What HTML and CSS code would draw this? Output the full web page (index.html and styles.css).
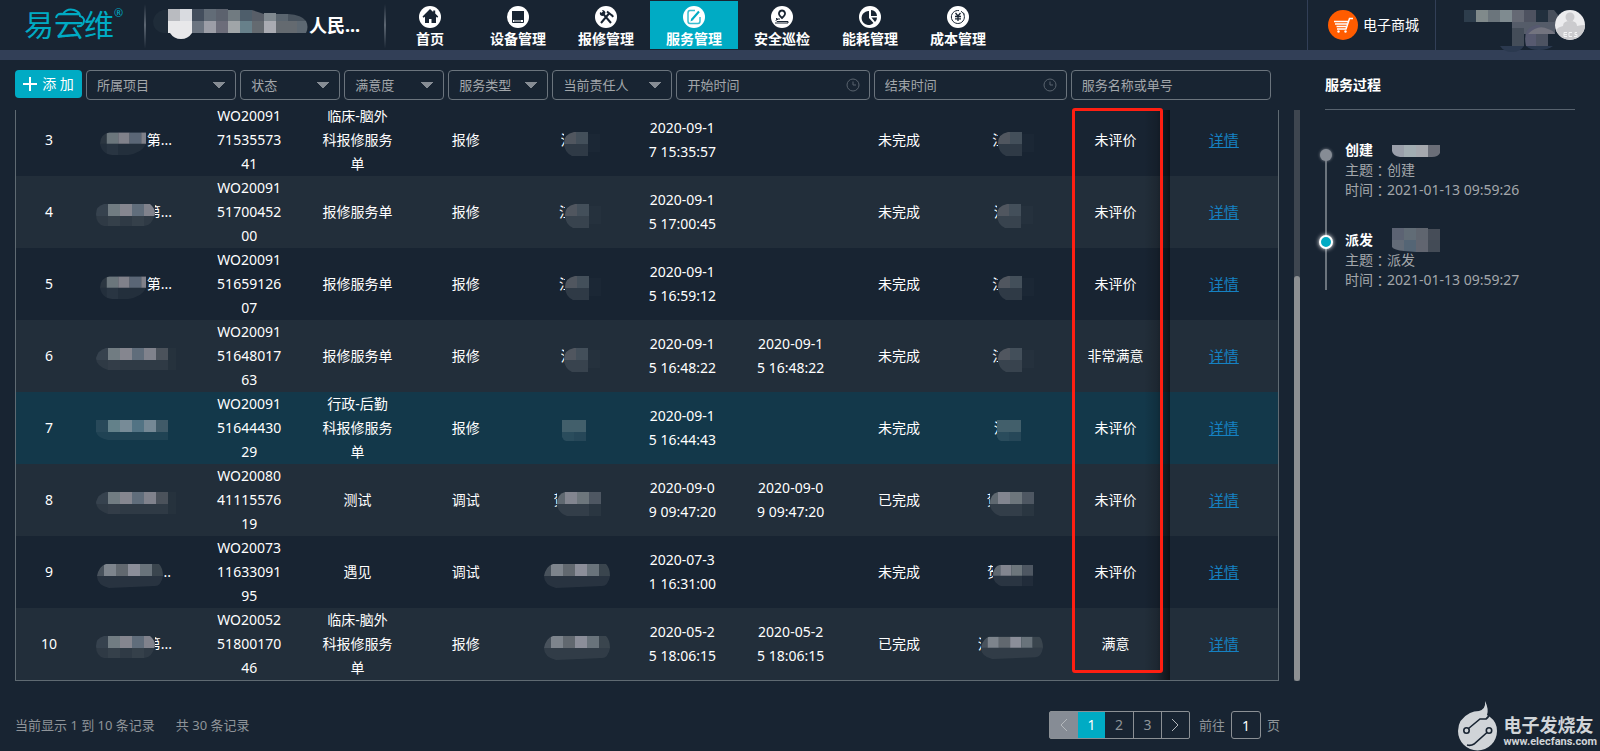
FILE: index.html
```html
<!DOCTYPE html>
<html lang="zh-CN">
<head>
<meta charset="utf-8">
<title>服务管理</title>
<link rel="stylesheet" href="styles.css">
</head>
<body>
<svg class="defs" aria-hidden="true">
  <clipPath id="c48"><path d="M48 8H10Q0 10 0 20Q2 32 16 32H28Q44 30 48 20Z"/></clipPath>
  <clipPath id="c59"><path d="M8 8H54Q59 12 59 18Q56 30 48 30H8Q0 28 0 18Q0 10 8 8Z"/></clipPath>
  <clipPath id="c80"><path d="M10 8H80V30H12Q0 26 0 18Q2 10 10 8Z"/></clipPath>
  <clipPath id="c36"><path d="M10 8H24V10H36V28H24V32H8Q0 28 0 19Q0 10 10 8Z"/></clipPath>
  <clipPath id="c44"><path d="M8 8H44V32H10Q0 28 0 20Q0 10 8 8Z"/></clipPath>
  <clipPath id="c66"><path d="M9 8H62Q66 12 66 20Q64 30 58 30L12 32Q0 29 0 20Q2 10 9 8Z"/></clipPath>
  <symbol id="m48" viewBox="0 0 48 32"><g clip-path="url(#c48)"><path fill="#2b3641" d="M0 8h7v12H0z"/><path fill="#6b767c" d="M7 8h12v12H7z"/><path fill="#80818a" d="M19 8h12v12H19z"/><path fill="#5a6676" d="M31 8h12v12H31z"/><path fill="#80818a" d="M43 8h5v12h-5z"/><path fill="#fff" opacity=".05" d="M0 20h48v12H0z"/><path fill="#fff" opacity=".03" d="M7 20h12v12H7z"/></g></symbol>
  <symbol id="m59" viewBox="0 0 59 32"><g clip-path="url(#c59)"><path fill="#36424e" d="M0 8h12v12H0z"/><path fill="#717c82" d="M12 8h12v12H12z"/><path fill="#85868f" d="M24 8h12v12H24z"/><path fill="#606d7b" d="M36 8h12v12H36z"/><path fill="#80828c" d="M48 8h11v12H48z"/><path fill="#fff" opacity=".06" d="M0 20h59v12H0z"/><path fill="#fff" opacity=".03" d="M12 20h12v12H12zM36 20h12v12H36z"/></g></symbol>
  <symbol id="m80" viewBox="0 0 80 32"><g clip-path="url(#c80)"><path fill="#36424e" d="M0 8h12v12H0z"/><path fill="#717c82" d="M12 8h12v12H12z"/><path fill="#85868f" d="M24 8h12v12H24z"/><path fill="#606d7b" d="M36 8h12v12H36z"/><path fill="#80828c" d="M48 8h12v12H48z"/><path fill="#4b525b" d="M60 8h12v12H60z"/><path fill="#fff" opacity=".06" d="M0 20h72v12H0z"/><path fill="#fff" opacity=".02" d="M72 8h8v22h-8zM12 20h12v12H12z"/></g></symbol>
  <symbol id="m80t" viewBox="0 0 80 32"><path fill="#28495a" d="M0 8h12v12H0z"/><path fill="#63818a" d="M12 8h12v12H12z"/><path fill="#778b97" d="M24 8h12v12H24z"/><path fill="#527384" d="M36 8h12v12H36z"/><path fill="#758895" d="M48 8h12v12H48z"/><path fill="#405a68" d="M60 8h12v12H60z"/><path fill="#fff" opacity=".06" d="M0 20h72v8H12Q2 26 0 20z"/></symbol>
  <symbol id="m36" viewBox="0 0 36 32"><g clip-path="url(#c36)"><path fill="#50565f" d="M0 8h12v12H0z"/><path fill="#434f5a" d="M12 8h12v12H12z"/><path fill="#fff" opacity=".1" d="M0 20h24v12H0z"/><path fill="#fff" opacity=".015" d="M24 8h12v20H24z"/></g></symbol>
  <symbol id="m36t" viewBox="0 0 36 32"><path fill="#425f6b" d="M0 8h24v12H0z"/><path fill="#2a4c5c" d="M0 20h24v9H4q-3-1-4-4z"/><path fill="#264758" d="M12 20h12v9H12z"/></symbol>
  <symbol id="m44" viewBox="0 0 44 32"><g clip-path="url(#c44)"><path fill="#5f6870" d="M0 8h8v12H0z"/><path fill="#82858f" d="M8 8h12v12H8z"/><path fill="#6d767c" d="M20 8h12v12H20z"/><path fill="#4e5762" d="M32 8h12v12H32z"/><path fill="#fff" opacity=".08" d="M0 20h32v12H0z"/><path fill="#fff" opacity=".04" d="M32 20h12v12H32z"/></g></symbol>
  <symbol id="m66" viewBox="0 0 66 32"><g clip-path="url(#c66)"><path fill="#48525c" d="M0 8h7v12H0z"/><path fill="#7d848c" d="M7 8h12v12H7z"/><path fill="#61686f" d="M19 8h12v12H19z"/><path fill="#8b8e99" d="M31 8h12v12H31z"/><path fill="#69737b" d="M43 8h12v12H43z"/><path fill="#3a454e" d="M55 8h11v12H55z"/><path fill="#fff" opacity=".07" d="M0 20h66v12H0z"/></g></symbol>
</svg>

<header class="topbar">
  <a class="logo" href="#">易云维<sup>®</sup>
    <svg class="logo-cloud" viewBox="0 0 34 20" fill="none" stroke="#00abc4" stroke-width="2"><path d="M3 10Q4 5 10 6Q14 0 21 2Q27 4 27 8Q33 10 30 16Q28 19 24 18"/></svg>
  </a>
  <div class="tenant">
    <svg width="156" height="32" viewBox="0 0 156 32"><path fill="#1f2c39" d="M10 1H30V24H10Q0 22 0 12Q2 3 10 1Z"/><path fill="#b9bbc0" d="M15 0h12v12H15z"/><path fill="#d9dbe0" d="M27 0h12v12H27z"/><path fill="#434e5d" d="M39 0h12v12H39z"/><path fill="#626c77" d="M51 0h12v12H51z"/><path fill="#5c626e" d="M63 0h12v12H63z"/><path fill="#717b81" d="M75 1h12v11H75z"/><path fill="#4e5e6b" d="M87 1h12v11H87z"/><path fill="#585e68" d="M99 1l12 4v7H99z"/><path fill="#7f888f" d="M111 4h12v8h-12z"/><path fill="#5a656f" d="M123 5h12v7h-12z"/><path fill="#48535e" d="M135 5q14 1 18 7h-18z"/><path fill="#e8e8ea" d="M15 12h24v12q-4 6-11 6t-11-6h-2z"/><path fill="#6b7480" d="M39 12h12v12H39z"/><path fill="#9c9ea7" d="M51 12h12v12H51z"/><path fill="#6c6d7a" d="M63 12h12v12H63z"/><path fill="#a0a5a8" d="M75 12h12v12H75z"/><path fill="#67808a" d="M87 12h12v12H87z"/><path fill="#646a70" d="M99 12h12v12H99z"/><path fill="#a9abb2" d="M111 12h12v12h-12z"/><path fill="#646a70" d="M123 12h21v12h-21z"/><path fill="#5d6872" d="M144 12h9q3 6 0 12h-9z"/></svg>
    <strong>人民...</strong>
  </div>
  <nav class="nav">
    <a href="#"><svg viewBox="0 0 22 22"><circle cx="11" cy="11" r="11" fill="#fff"/><path fill="#182432" d="M11 3L3.500 10.500l1 1.200L6 10.800V17h4v-4h2.500v4H17v-6.200l1.200 1 1-1.200-3-3V4.500h-2V6z"/></svg>首页</a>
    <a href="#"><svg viewBox="0 0 22 22"><circle cx="11" cy="11" r="11" fill="#fff"/><path fill="#182432" d="M5 5h12v9H5z"/><path fill="none" stroke="#182432" d="M5.500 5.500h11v11h-11zM7 15h7"/></svg>设备管理</a>
    <a href="#"><svg viewBox="0 0 22 22"><circle cx="11" cy="11" r="11" fill="#fff"/><path fill="none" stroke="#182432" stroke-width="2" d="M7 6.500L16 17M6 17l8-9.500M12 5.500l5 4M17 9l1 2"/><path fill="#182432" d="M5 6l2 1 1-1-1-2q3 0 3.500 3L8 10Q4 10 5 6z"/></svg>报修管理</a>
    <a class="active" href="#" aria-current="page"><svg viewBox="0 0 22 22"><circle cx="11" cy="11" r="11" fill="#fff"/><path fill="none" stroke="#38bdd0" stroke-width="1.500" d="M12 4.500H7Q5 4.500 5 7v8q0 2.500 2 2.500h8q2 0 2-2.500v-4"/><path fill="none" stroke="#00abc4" stroke-width="2" d="M9 13.500l7-8"/><path fill="#00abc4" d="M7.500 15.500l.7-3 2.200 1.500z"/></svg>服务管理</a>
    <a href="#"><svg viewBox="0 0 22 22"><circle cx="11" cy="11" r="11" fill="#fff"/><path fill="none" stroke="#182432" stroke-width="1.800" d="M11 12Q7.500 9 8 7q.8-2.500 3-2.500T14 7q.5 2-3 5z"/><path fill="none" stroke="#182432" d="M9 13H6q-2 1.500 0 2.500h11v1.500H4M5 12l2 2"/></svg>安全巡检</a>
    <a href="#"><svg viewBox="0 0 22 22"><circle cx="11" cy="11" r="11" fill="#fff"/><path fill="#182432" d="M10 5v7l4.500 5A7 7 0 1 1 10 5z"/><path fill="#182432" d="M12 4a6 6 0 0 1 6 6h-6zM12.500 11.500H18q0 3-2 4.500z"/></svg>能耗管理</a>
    <a href="#"><svg viewBox="0 0 22 22"><circle cx="11" cy="11" r="11" fill="#fff"/><g fill="none" stroke="#182432"><path d="M14 5.300a6.500 6.500 0 1 1-2-.7M16 6.500q1 1 1.300 2"/><path stroke-width="1.300" d="M8.500 7l2.500 3 2.500-3M11 10v5M8 10.500h6M8 12.800h6"/></g></svg>成本管理</a>
  </nav>
  <a class="mall" href="#">
    <svg viewBox="0 0 30 30"><circle cx="15" cy="15" r="15" fill="#ff5c00"/><g fill="none" stroke="#fff" stroke-width="1.500"><path d="M25 8.500h-3.500L18 19H9M6 11.500h14M7 14h12M8.500 16.500H18"/></g><circle cx="10.500" cy="21.500" r="1.200" fill="#fff"/><circle cx="17.500" cy="21.500" r="1.200" fill="#fff"/></svg>
    电子商城
  </a>
  <div class="user">
    <svg width="94" height="44" viewBox="0 0 94 44"><path fill="#2d3d4c" d="M0 2h12v12H0z"/><path fill="#808a8b" d="M12 2h12v12H12z"/><path fill="#6b757c" d="M24 2h12v12H24z"/><path fill="#7f8b90" d="M36 2h12v12H36z"/><path fill="#656974" d="M48 2h12v12H48z"/><path fill="#4e5260" d="M60 2h12v12H60z"/><path fill="#22303e" d="M72 2h12v12H72z"/><path fill="#484f5b" d="M84 2h6l4 5v7H84z"/><path fill="#555c69" d="M48 14h43v12H48z"/><path fill="#444d59" d="M48 20h12v18H48z"/><path fill="#2b394f" d="M36 38h24q-4 6-12 6t-12-6zM62 38h27q-5 4-14 4t-13-4z"/><path fill="#575a70" d="M62 38Q58 20 72 17h4v21z"/><path fill="#73747f" d="M64 26q10-10 20-5 6 2 7 5z"/><path fill="#4d5362" d="M72 26h12v12H72z"/></svg>
    <svg width="30" height="30" viewBox="0 0 30 30"><circle cx="15" cy="15" r="15" fill="#ececee"/><circle cx="15" cy="7" r="4.500" fill="#cbcbce"/><path fill="#cbcbce" d="M8 16q0-5 7-5t7 5q4-1 8-1a15 15 0 0 1-29 5q2-3 7-4z"/><path fill="none" stroke="#f4f4f5" d="M12 22.500H9v4h3M9 24.500h3M17 22.500h-3v4h3M22 22.500h-2v2h2v2h-3"/></svg>
  </div>
</header>

<main class="main">
  <section class="list">
    <form class="filters">
      <button type="button" class="add"><svg viewBox="0 0 14 14"><path stroke="#fff" stroke-width="2" d="M7 0v14M0 7h14"/></svg>添 加</button>
      <select aria-label="所属项目"><option>所属项目</option></select>
      <select aria-label="状态"><option>状态</option></select>
      <select aria-label="满意度"><option>满意度</option></select>
      <select aria-label="服务类型"><option>服务类型</option></select>
      <select aria-label="当前责任人"><option>当前责任人</option></select>
      <label class="date"><input type="text" placeholder="开始时间" aria-label="开始时间"><svg viewBox="0 0 14 14"><circle cx="7" cy="7" r="6"/><path d="M7 3.500V7h3"/></svg></label>
      <label class="date"><input type="text" placeholder="结束时间" aria-label="结束时间"><svg viewBox="0 0 14 14"><circle cx="7" cy="7" r="6"/><path d="M7 3.500V7h3"/></svg></label>
      <input type="text" placeholder="服务名称或单号" aria-label="服务名称或单号">
    </form>

    <div class="table-area">
      <div class="table-box">
        <table>
          <colgroup><col class="col-no"><col class="col-project"><col span="10"></colgroup>
          <tbody>
            <tr><td>3</td><td class="project"><span class="masked inset"><svg width="46" height="32"><use href="#m48"/></svg><span class="tail">第...</span></span></td><td>WO200917153557341</td><td>临床-脑外科报修服务单</td><td>报修</td><td class="person"><span class="masked short"><span class="clip clip-s">江</span><svg width="36" height="32"><use href="#m36"/></svg></span></td><td>2020-09-17 15:35:57</td><td></td><td>未完成</td><td class="person"><span class="masked short"><span class="clip">江</span><svg width="36" height="32"><use href="#m36"/></svg></span></td><td>未评价</td><td><a class="detail" href="#">详情</a></td></tr>
            <tr><td>4</td><td class="project"><span class="masked"><svg width="59" height="32"><use href="#m59"/></svg><span class="tail tail-m">第...</span></span></td><td>WO200915170045200</td><td>报修服务单</td><td>报修</td><td class="person"><span class="masked short"><span class="clip">江</span><svg width="36" height="32"><use href="#m36"/></svg></span></td><td>2020-09-15 17:00:45</td><td></td><td>未完成</td><td class="person"><span class="masked short"><span class="clip clip-s">江</span><svg width="36" height="32"><use href="#m36"/></svg></span></td><td>未评价</td><td><a class="detail" href="#">详情</a></td></tr>
            <tr><td>5</td><td class="project"><span class="masked inset"><svg width="46" height="32"><use href="#m48"/></svg><span class="tail">第...</span></span></td><td>WO200915165912607</td><td>报修服务单</td><td>报修</td><td class="person"><span class="masked short"><span class="clip">江</span><svg width="36" height="32"><use href="#m36"/></svg></span></td><td>2020-09-15 16:59:12</td><td></td><td>未完成</td><td class="person"><span class="masked short"><span class="clip">江</span><svg width="36" height="32"><use href="#m36"/></svg></span></td><td>未评价</td><td><a class="detail" href="#">详情</a></td></tr>
            <tr><td>6</td><td class="project"><span class="masked"><svg width="80" height="32"><use href="#m80"/></svg></span></td><td>WO200915164801763</td><td>报修服务单</td><td>报修</td><td class="person"><span class="masked short"><span class="clip clip-s">江</span><svg width="36" height="32"><use href="#m36"/></svg></span></td><td>2020-09-15 16:48:22</td><td>2020-09-15 16:48:22</td><td>未完成</td><td class="person"><span class="masked short"><span class="clip">江</span><svg width="36" height="32"><use href="#m36"/></svg></span></td><td>非常满意</td><td><a class="detail" href="#">详情</a></td></tr>
            <tr class="current"><td>7</td><td class="project"><span class="masked"><svg width="80" height="32"><use href="#m80t"/></svg></span></td><td>WO200915164443029</td><td>行政-后勤科报修服务单</td><td>报修</td><td class="person"><span class="masked short"><svg width="36" height="32"><use href="#m36t"/></svg></span></td><td>2020-09-15 16:44:43</td><td></td><td>未完成</td><td class="person"><span class="masked short"><span class="clip clip-s">江</span><svg width="36" height="32"><use href="#m36t"/></svg></span></td><td>未评价</td><td><a class="detail" href="#">详情</a></td></tr>
            <tr><td>8</td><td class="project"><span class="masked"><svg width="80" height="32"><use href="#m80"/></svg></span></td><td>WO200804111557619</td><td>测试</td><td>调试</td><td class="person"><span class="masked"><span class="clip clip-s">贺</span><svg width="44" height="32"><use href="#m44"/></svg></span></td><td>2020-09-09 09:47:20</td><td>2020-09-09 09:47:20</td><td>已完成</td><td class="person"><span class="masked"><span class="clip clip-s">贺</span><svg width="44" height="32"><use href="#m44"/></svg></span></td><td>未评价</td><td><a class="detail" href="#">详情</a></td></tr>
            <tr><td>9</td><td class="project"><span class="masked"><svg width="68" height="32"><use href="#m66"/></svg><span class="tail tail-s">第...</span></span></td><td>WO200731163309195</td><td>遇见</td><td>调试</td><td class="person"><span class="masked"><svg width="66" height="32"><use href="#m66"/></svg></span></td><td>2020-07-31 16:31:00</td><td></td><td>未完成</td><td class="person"><span class="masked"><span class="clip">贺</span><svg width="40" height="32"><use href="#m44"/></svg></span></td><td>未评价</td><td><a class="detail" href="#">详情</a></td></tr>
            <tr><td>10</td><td class="project"><span class="masked"><svg width="59" height="32"><use href="#m59"/></svg><span class="tail tail-m">第...</span></span></td><td>WO200525180017046</td><td>临床-脑外科报修服务单</td><td>报修</td><td class="person"><span class="masked"><svg width="66" height="32"><use href="#m66"/></svg></span></td><td>2020-05-25 18:06:15</td><td>2020-05-25 18:06:15</td><td>已完成</td><td class="person"><span class="masked"><span class="clip clip-s">江</span><svg width="62" height="32"><use href="#m66"/></svg></span></td><td>满意</td><td><a class="detail" href="#">详情</a></td></tr>
          </tbody>
        </table>
      </div>
      <div class="pinned-shadow"></div>
      <div class="highlight"></div>
    </div>

    <footer class="pager">
      <p><span>当前显示 1 到 10 条记录</span><span>共 30 条记录</span></p>
      <div class="pages">
        <button type="button" class="prev" disabled aria-label="上一页"><svg viewBox="0 0 8 14"><path d="M7 1L1 7l6 6"/></svg></button>
        <button type="button" class="on">1</button>
        <button type="button">2</button>
        <button type="button">3</button>
        <button type="button" aria-label="下一页"><svg viewBox="0 0 8 14"><path d="M1 1l6 6-6 6"/></svg></button>
      </div>
      <label class="jump">前往<input type="text" value="1">页</label>
    </footer>
  </section>

  <div class="scrollbar"><div class="thumb"></div></div>

  <aside class="process">
    <h2>服务过程</h2>
    <ol class="timeline">
      <li>
        <h3>创建<svg width="48" height="24" viewBox="0 0 48 24"><path fill="#9a9faa" d="M0 7h12v12H8Q1 18 0 13z"/><path fill="#a2adb2" d="M12 7h12v12H12z"/><path fill="#a5a8ae" d="M24 7h12v12H24z"/><path fill="#6a6e78" d="M36 7h12v8q-2 4-8 4h-4z"/></svg></h3>
        <p>主题<span class="colon" lang="zh-TW">：</span>创建</p>
        <p>时间<span class="colon" lang="zh-TW">：</span>2021-01-13 09:59:26</p>
      </li>
      <li class="now">
        <h3>派发<svg width="48" height="24" viewBox="0 0 48 24"><path fill="#5c6373" d="M0 0h12v12H0z"/><path fill="#616c76" d="M12 0h12v12H12z"/><path fill="#5f656f" d="M24 0h12v12H24z"/><path fill="#464d58" d="M36 1h12v11H36z"/><path fill="#626b77" d="M0 12h12v11Q2 22 0 19z"/><path fill="#546575" d="M12 12h12v12l-12-1z"/><path fill="#616570" d="M24 12h12v12H24z"/><path fill="#434b56" d="M36 12h12v12H36z"/></svg></h3>
        <p>主题<span class="colon" lang="zh-TW">：</span>派发</p>
        <p>时间<span class="colon" lang="zh-TW">：</span>2021-01-13 09:59:27</p>
      </li>
    </ol>
  </aside>
</main>

<div class="watermark">
  <svg width="40" height="50" viewBox="0 0 40 50"><path fill="#d0d4d8" d="M27 0q4 8 2 14l3 2q7 5 7 14a19.500 19.500 0 0 1-39 0Q0 18 12 12q4-2 9-2 7-2 6-10z"/><g fill="none" stroke="#182432" stroke-width="1.600"><circle cx="8.500" cy="29.500" r="2.700"/><path d="M10.500 27.500L22 18h6q3-2 3-5"/><circle cx="31" cy="29.500" r="2.700"/><path d="M29 31.500L16 43q-3 2-7 1"/></g></svg>
  <div><b>电子发烧友</b><span>www.elecfans.com</span></div>
</div>
</body>
</html>
```

FILE: styles.css
```css
*, *::before, *::after { box-sizing: border-box; }

body {
  margin: 0;
  height: 100vh;
  display: flex;
  flex-direction: column;
  overflow: hidden;
  background: #182432;
  color: #fff;
  font: 14px/20px "Noto Sans", "Noto Sans CJK SC", sans-serif;
}

a { color: inherit; text-decoration: none; }
h2, h3, p, ol { margin: 0; padding: 0; }
button, input, select { font: inherit; color: inherit; }
svg { flex: none; }
.defs { position: absolute; width: 0; height: 0; }

/* top bar */
.topbar {
  flex: none;
  display: flex;
  height: 60px;
  border-bottom: 10px solid #323f57;
}

.logo {
  position: relative;
  display: flex;
  align-items: center;
  width: 144px;
  padding-left: 24px;
  color: #00abc4;
  font-size: 30px;
}
.logo sup { align-self: flex-start; padding-top: 3px; font-size: 11px; }
.logo-cloud { position: absolute; left: 53px; top: 8px; width: 34px; height: 20px; }

.tenant, .nav {
  border-left: 2px solid;
  border-image: linear-gradient(#182432 10%, #5c6672 50%, #182432 95%) 1;
}
.tenant { display: flex; align-items: center; width: 240px; padding-left: 7px; font-size: 18px; }

.nav { display: flex; padding: 1px 0; }
.nav a {
  display: flex;
  flex-direction: column;
  align-items: center;
  gap: 1px;
  width: 88px;
  padding-top: 5px;
  font-weight: 700;
}
.nav svg { width: 22px; height: 22px; }
.nav .active { background: #00abc4; }

.mall {
  display: flex;
  align-items: center;
  gap: 5px;
  width: 129px;
  margin-left: auto;
  padding-left: 20px;
  border: solid #323f57;
  border-width: 0 1px;
}
.mall svg { width: 30px; height: 30px; }
.user { display: flex; align-items: center; justify-content: flex-end; width: 164px; padding-right: 15px; }
.user svg:first-child { margin: 9px -3px 0 0; }

/* page body */
.main {
  flex: 1;
  min-height: 0;
  display: grid;
  grid-template-columns: 1fr 6px 275px;
  padding: 10px 25px 12px 15px;
}
.list {
  display: flex;
  flex-direction: column;
  min-width: 0;
  min-height: 0;
  margin-right: 15px;
}

.filters {
  display: grid;
  grid-template-columns: 67px 150fr 100fr 100fr 100fr 120fr 193fr 193fr 200fr;
  gap: 4px;
  padding-right: 8px;
}
.filters select, .filters input {
  width: 100%;
  min-width: 0;
  height: 30px;
  padding: 0 10px;
  border: 1px solid #6b747d;
  border-radius: 4px;
  background: transparent;
  color: #a3a7ab;
  font-size: 13px;
}
.filters input::placeholder { color: #a3a7ab; opacity: 1; }
.filters select {
  appearance: none;
  background-image: linear-gradient(to bottom right, #868c94 50%, transparent 50%), linear-gradient(to bottom left, #868c94 50%, transparent 50%);
  background-position: right 10px center, right 16px center;
  background-size: 6px 7px;
  background-repeat: no-repeat;
}
.date { position: relative; min-width: 0; }
.date svg {
  position: absolute;
  right: 10px;
  top: 8px;
  width: 14px;
  height: 14px;
  fill: none;
  stroke: #59636e;
}
.add {
  display: flex;
  align-items: center;
  justify-content: center;
  gap: 5px;
  height: 28px;
  padding: 0;
  border: 0;
  border-radius: 4px;
  background: #00abc4;
}
.add svg { width: 14px; height: 14px; }

/* table, scrolled to its end */
.table-area { position: relative; flex: 1; min-height: 0; display: flex; margin: 10px 0 30px; }
.table-box {
  flex: 1;
  display: flex;
  flex-direction: column;
  justify-content: flex-end;
  overflow: hidden;
  border: solid #5f6a72;
  border-width: 0 1px 1px;
}
table { width: 100%; table-layout: fixed; border-collapse: collapse; }
.col-no { width: 66px; }
.col-project { width: 113px; }
tr { background: #182432; }
tr:nth-child(even) { background: #222e3a; }
tr.current { background: #13384a; }
td {
  height: 72px;
  padding: 0 19px;
  line-height: 24px;
  text-align: center;
  word-break: break-all;
}
td.project { padding: 0 0 1px 14px; text-align: left; }
td.person { padding: 0 0 1px 6px; }
.masked { display: inline-flex; align-items: center; vertical-align: middle; white-space: nowrap; }
.inset { padding-left: 4px; }
.short { padding-left: 6px; }
.clip { width: 6px; overflow: hidden; }
.clip-s { width: 3px; }
.tail { display: flex; justify-content: flex-end; width: 26px; overflow: hidden; }
.tail-m { width: 17px; }
.tail-s { width: 7px; }
.detail { color: #1581c2; font-size: 15px; text-decoration: underline; }

.pinned-shadow {
  position: absolute;
  top: 0;
  bottom: 1px;
  right: 109px;
  width: 26px;
  background: linear-gradient(to right, transparent, rgba(0, 0, 0, .15) 50%, rgba(0, 0, 0, .6));
}
.highlight {
  position: absolute;
  top: -2px;
  bottom: 8px;
  right: 116px;
  width: 91px;
  border: 3px solid #ff1f12;
  border-radius: 3px;
}

/* pager */
.pager { display: flex; align-items: center; color: #8f9499; font-size: 13px; }
.pager p { display: flex; gap: 21px; margin-right: auto; }
.pages { display: flex; margin-right: 9px; border: 1px solid #8b9095; border-radius: 2px; }
.pages button {
  display: flex;
  align-items: center;
  justify-content: center;
  width: 28px;
  height: 26px;
  padding: 0;
  border: 0;
  border-left: 1px solid #8b9095;
  background: transparent;
  font-size: 14px;
}
.pages button:first-child { border-left: 0; }
.pages svg { width: 8px; height: 14px; fill: none; stroke: #b4b8bc; stroke-width: 1; }
.pages .prev { background: #868c95; }
.pages .on { width: 27px; border: 0; background: #00abc4; color: #fff; }
.pages .on + button { border-left: 0; }
.jump { display: flex; align-items: center; gap: 6px; margin-right: -1px; }
.jump input {
  width: 30px;
  height: 28px;
  padding: 0;
  border: 1px solid #8b9095;
  border-radius: 3px;
  background: transparent;
  color: #fff;
  font-size: 14px;
  text-align: center;
}

.scrollbar { display: flex; align-items: flex-end; margin: 40px 0 58px; background: #3e4650; }
.scrollbar .thumb { width: 6px; height: 71%; border-radius: 3px; background: #8d9093; }

/* service process */
.process { margin-left: 25px; }
.process h2 {
  padding: 5px 0 14px;
  border-bottom: 1px solid #57626e;
  font-size: 14px;
  line-height: 20px;
}
.timeline { list-style: none; padding-top: 30px; }
.timeline li { position: relative; padding-left: 20px; margin-bottom: 30px; color: #a3a7ab; }
.timeline li::before {
  content: "";
  position: absolute;
  left: 0;
  top: 14px;
  width: 2px;
  height: 90px;
  background: #6b747d;
}
.timeline li.now::before { height: 50px; top: 10px; }
.timeline li::after {
  content: "";
  position: absolute;
  left: -5px;
  top: 9px;
  width: 12px;
  height: 12px;
  border-radius: 50%;
  background: #868c95;
  box-shadow: 0 0 3px #868c95;
}
.timeline li.now::after {
  left: -6px;
  top: 5px;
  width: 14px;
  height: 14px;
  border: 2px solid #fff;
  background: #00abc4;
  box-shadow: 0 0 4px #fff;
}
.timeline h3 { display: flex; align-items: center; gap: 19px; height: 20px; color: #fff; font-size: 14px; }
.timeline p { display: flex; height: 20px; }
.colon { font-family: "Noto Sans CJK TC", sans-serif; }

.watermark {
  position: absolute;
  right: 3px;
  bottom: 0;
  display: flex;
  align-items: flex-end;
  gap: 5px;
  color: #d0d4d8;
}
.watermark div { display: flex; flex-direction: column; padding-bottom: 3px; }
.watermark b { font-size: 18px; line-height: 20px; }
.watermark span { font: 700 11px/13px Roboto, sans-serif; }
```
